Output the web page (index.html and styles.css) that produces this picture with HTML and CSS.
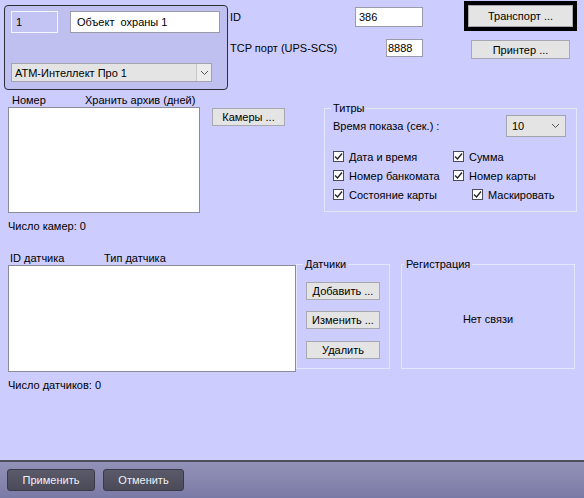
FILE: index.html
```html
<!DOCTYPE html>
<html lang="ru">
<head>
<meta charset="utf-8">
<title>Объект охраны</title>
<link rel="stylesheet" href="styles.css">
</head>
<body>
<div class="window">
  <div class="content">
    <div class="top">
      <div class="objbox">
        <div class="objrow">
          <div class="field f-num">1</div>
          <div class="field f-name">Объект&nbsp; охраны 1</div>
        </div>
        <div class="combo c-atm">
          <span class="combo-text">АТМ-Интеллект Про 1</span>
          <span class="combo-btn"><svg width="9" height="6" viewBox="0 0 9 6"><path d="M1 1 L4.5 4.5 L8 1" fill="none" stroke="#555" stroke-width="1"/></svg></span>
        </div>
      </div>
      <div class="mid">
        <div class="mrow r1"><span>ID</span><div class="field f-id">386</div></div>
        <div class="mrow r2"><span>TCP порт (UPS-SCS)</span><div class="field f-port">8888</div></div>
      </div>
      <div class="rbtns">
        <div class="focus"><div class="btn b-trans">Транспорт ...</div></div>
        <div class="btn b-print">Принтер ...</div>
      </div>
    </div>

    <div class="mid2">
      <div class="cams">
        <div class="heads"><span class="h-num">Номер</span><span>Хранить архив (дней)</span></div>
        <div class="list l-cams"></div>
        <div class="count">Число камер: 0</div>
      </div>
      <div class="btn b-cams">Камеры ...</div>
      <fieldset class="group g-titry">
        <legend>Титры</legend>
        <div class="trow">
          <span>Время показа (сек.) :</span>
          <div class="combo c-ten">
            <span class="combo-text">10</span>
            <span class="combo-arrow"><svg width="9" height="6" viewBox="0 0 9 6"><path d="M1 1 L4.5 4.5 L8 1" fill="none" stroke="#555" stroke-width="1"/></svg></span>
          </div>
        </div>
        <div class="checks">
          <div class="crow">
            <label class="chk c1"><span class="box"><svg width="9" height="9" viewBox="0 0 9 9"><path d="M1 4.5 L3.5 7 L8 1.5" fill="none" stroke="#222" stroke-width="1.3"/></svg></span>Дата и время</label>
            <label class="chk"><span class="box"><svg width="9" height="9" viewBox="0 0 9 9"><path d="M1 4.5 L3.5 7 L8 1.5" fill="none" stroke="#222" stroke-width="1.3"/></svg></span>Сумма</label>
          </div>
          <div class="crow">
            <label class="chk c1"><span class="box"><svg width="9" height="9" viewBox="0 0 9 9"><path d="M1 4.5 L3.5 7 L8 1.5" fill="none" stroke="#222" stroke-width="1.3"/></svg></span>Номер банкомата</label>
            <label class="chk"><span class="box"><svg width="9" height="9" viewBox="0 0 9 9"><path d="M1 4.5 L3.5 7 L8 1.5" fill="none" stroke="#222" stroke-width="1.3"/></svg></span>Номер карты</label>
          </div>
          <div class="crow">
            <label class="chk c1 c1-wide"><span class="box"><svg width="9" height="9" viewBox="0 0 9 9"><path d="M1 4.5 L3.5 7 L8 1.5" fill="none" stroke="#222" stroke-width="1.3"/></svg></span>Состояние карты</label>
            <label class="chk"><span class="box"><svg width="9" height="9" viewBox="0 0 9 9"><path d="M1 4.5 L3.5 7 L8 1.5" fill="none" stroke="#222" stroke-width="1.3"/></svg></span>Маскировать</label>
          </div>
        </div>
      </fieldset>
    </div>

    <div class="bottom3">
      <div class="sensors">
        <div class="heads"><span class="h-id">ID датчика</span><span>Тип датчика</span></div>
        <div class="list l-sens"></div>
        <div class="count c-sens">Число датчиков: 0</div>
      </div>
      <fieldset class="group g-dat">
        <legend>Датчики</legend>
        <div class="btn b-add">Добавить ...</div>
        <div class="btn b-edit">Изменить ...</div>
        <div class="btn b-del">Удалить</div>
      </fieldset>
      <fieldset class="group g-reg">
        <legend>Регистрация</legend>
        <div class="reg-body">Нет связи</div>
      </fieldset>
    </div>
  </div>
  <div class="footer">
    <div class="fbtn fb-apply">Применить</div>
    <div class="fbtn fb-cancel">Отменить</div>
  </div>
</div>
</body>
</html>
```

FILE: styles.css
```css
* { box-sizing: border-box; }
html, body { margin: 0; padding: 0; }
body {
  background: #ccccff;
  font-family: "Liberation Sans", Arial, sans-serif;
  font-size: 11px;
  color: #000;
  line-height: 14px;
}
.window {
  width: 584px;
  height: 498px;
  display: flex;
  flex-direction: column;
  overflow: hidden;
}
.content { flex: 1; }
.top > *, .mid2 > *, .bottom3 > * { flex-shrink: 0; }

/* top row */
.top { display: flex; align-items: flex-start; height: 89px; }
.objbox {
  margin: 5px 0 0 4px;
  width: 224px;
  height: 85px;
  border: 1px solid #2e2e3a;
  border-radius: 4px;
  background: #c0c0f0;
  padding: 5px 0 0 6px;
}
.objrow { display: flex; }
.field {
  display: flex;
  align-items: center;
  padding-left: 3px;
  background: #fff;
  border: 1px solid #9a9aa8;
}
.f-num {
  width: 47px; height: 22px;
  background: #c4c4f4;
  border: 1px solid #f4f4ff;
  padding-left: 4px;
}
.f-name { width: 150px; height: 22px; margin-left: 12px; padding-left: 6px; }
.combo {
  display: flex;
  align-items: center;
  background: #e4e4e4;
  border: 1px solid #a4a4ac;
}
.combo-text { flex: 1; padding-left: 3px; }
.c-atm { width: 201px; height: 19px; margin-top: 30px; }
.combo-btn {
  width: 15px; height: 17px;
  display: flex; align-items: center; justify-content: center;
  border-left: 1px solid #c8c8cc;
  background: #ececec;
}
.combo-arrow { width: 20px; display: flex; justify-content: center; }

.mid { margin: 7px 0 0 2px; width: 193px; }
.mrow { display: flex; align-items: center; justify-content: space-between; }
.r2 { margin-top: 12px; }
.f-id { width: 68px; height: 20px; }
.f-port { width: 37px; height: 18px; padding-left: 1px; }

.rbtns { margin: 1px 0 0 41px; display: flex; flex-direction: column; }
.focus {
  width: 113px; height: 30px;
  border: 4px solid #000;
}
.btn {
  display: flex;
  align-items: center;
  justify-content: center;
  background: #e4e4e4;
  border: 1px solid #a8a8b0;
  color: #000;
}
.b-trans { width: 105px; height: 22px; }
.b-print { width: 99px; height: 19px; margin: 9px 0 0 7px; }

/* middle */
.mid2 { display: flex; align-items: flex-start; height: 144px; }
.cams { margin: 4px 0 0 8px; width: 192px; }
.heads { display: flex; height: 14px; white-space: nowrap; }
.h-num { width: 77px; padding-left: 4px; }
.list { background: #fff; border: 1px solid #8a8a98; }
.l-cams { width: 192px; height: 106px; }
.count { margin-top: 6px; }
.b-cams { width: 73px; height: 18px; margin: 19px 0 0 12px; }

.group {
  margin: 0;
  padding: 0;
  border: 1px solid #e6e6fa;
  min-width: 0;
}
.group legend {
  padding: 0 2px;
  line-height: 14px;
}
.g-titry {
  margin: 12px 0 0 39px;
  width: 253px;
  height: 111px;
  padding: 0 10px 0 8px;
}
.g-titry legend { margin-left: -2px; }
.trow { display: flex; align-items: center; justify-content: space-between; height: 22px; }
.c-ten { width: 60px; height: 22px; padding-left: 2px; }
.checks { margin-top: 10px; }
.crow { display: flex; height: 19px; align-items: center; }
.chk { display: flex; align-items: center; }
.c1 { width: 120px; }
.c1-wide { width: 139px; }
.box {
  width: 11px; height: 11px;
  border: 1px solid #4a4a58;
  background: #fff;
  margin-right: 5px;
  display: flex; align-items: center; justify-content: center;
}

/* sensors */
.bottom3 { display: flex; align-items: flex-start; margin-top: 18px; }
.sensors { margin-left: 8px; width: 288px; }
.h-id { width: 96px; padding-left: 2px; }
.l-sens { width: 288px; height: 107px; }
.c-sens { margin-top: 6px; }
.g-dat {
  margin: 6px 0 0 0;
  width: 94px;
  height: 112px;
  padding: 0 0 0 9px;
}
.g-dat legend { margin-left: -3px; }
.g-dat .btn { width: 74px; height: 18px; }
.b-add { margin-top: 11px; }
.b-edit { margin-top: 11px; }
.b-del { margin-top: 12px; }
.g-reg {
  margin: 6px 0 0 11px;
  width: 174px;
  height: 112px;
}
.g-reg legend { margin-left: 2px; }
.reg-body {
  height: 96px;
  display: flex;
  align-items: center;
  justify-content: center;
}

/* footer */
.footer {
  height: 38px;
  border-top: 2px solid #4e4e5a;
  background: linear-gradient(#9292b8, #7a7aa6);
  display: flex;
  align-items: flex-start;
  padding: 7px 0 0 7px;
}
.fbtn {
  height: 22px;
  display: flex;
  align-items: center;
  justify-content: center;
  color: #f0f0f6;
  background: linear-gradient(#5a5a6a, #4a4a58);
  border: 1px solid #3a3a46;
  border-radius: 3px;
}
.fb-apply { width: 88px; }
.fb-cancel { width: 81px; margin-left: 8px; }
```
